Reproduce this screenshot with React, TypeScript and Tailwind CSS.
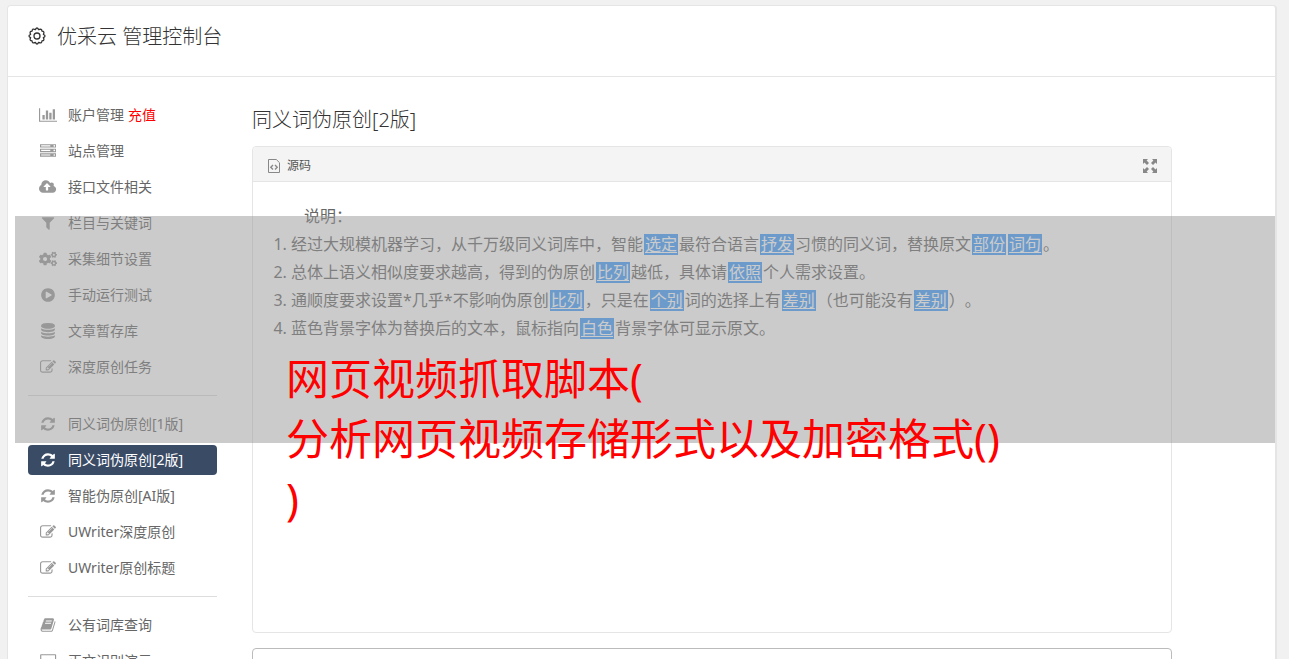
import type { ReactNode } from 'react'
import { FaCogs } from 'react-icons/fa'

type NavItem = {
  label: string
  icon: ReactNode
  extra?: string
  active?: boolean
}

function Glyph({ d, w = 1792 }: { d: string; w?: number }) {
  return (
    <svg viewBox={`0 0 ${w} 1792`} className="h-4 w-auto" fill="currentColor" aria-hidden="true">
      <path d={d} />
    </svg>
  )
}

const chart = <Glyph w={2048} d="M640 896v512h-256v-512h256zm384-512v1024h-256v-1024h256zm1024 1152v128h-2048v-1536h128v1408h1920zm-640-896v768h-256v-768h256zm384-384v1152h-256v-1152h256z" />
const server = <Glyph d="M128 1408h1024v-128h-1024v128zm0-512h1024v-128h-1024v128zm1568 448q0-40-28-68t-68-28-68 28-28 68 28 68 68 28 68-28 28-68zm-1568-960h1024v-128h-1024v128zm1568 448q0-40-28-68t-68-28-68 28-28 68 28 68 68 28 68-28 28-68zm0-512q0-40-28-68t-68-28-68 28-28 68 28 68 68 28 68-28 28-68zm96 832v384h-1792v-384h1792zm0-512v384h-1792v-384h1792zm0-512v384h-1792v-384h1792z" />
const cloud = <Glyph w={1920} d="M1280 864q0-14-9-23l-352-352q-9-9-23-9t-23 9l-351 351q-10 12-10 24 0 14 9 23t23 9h224v352q0 13 9.5 22.5t22.5 9.5h192q13 0 22.5-9.5t9.5-22.5v-352h224q13 0 22.5-9.5t9.5-22.5zm640 288q0 159-112.5 271.5t-271.5 112.5h-1088q-185 0-316.5-131.5t-131.5-316.5q0-130 70-240t188-165q-2-30-2-43 0-212 150-362t362-150q156 0 285.5 87t188.5 231q71-62 166-62 106 0 181 75t75 181q0 76-41 138 130 31 213.5 135.5t83.5 238.5z" />
const filter = <Glyph d="M1595 295q17 41-14 70l-493 493v742q0 42-39 59-13 5-25 5-27 0-45-19l-256-256q-19-19-19-45v-486l-493-493q-31-29-14-70 17-39 59-39h1280q42 0 59 39z" />
const play = <Glyph d="M896 128q209 0 385.5 103t279.5 279.5 103 385.5-103 385.5-279.5 279.5-385.5 103-385.5-103-279.5-279.5-103-385.5 103-385.5 279.5-279.5 385.5-103zm384 823q32-18 32-55t-32-55l-544-320q-31-19-64-1-32 19-32 56v640q0 37 32 56 16 8 32 8 17 0 32-9z" />
const database = <Glyph d="M896 768q237 0 443-43t325-127v170q0 69-103 128t-280 93.5-385 34.5-385-34.5-280-93.5-103-128v-170q119 84 325 127t443 43zm0 768q237 0 443-43t325-127v170q0 69-103 128t-280 93.5-385 34.5-385-34.5-280-93.5-103-128v-170q119 84 325 127t443 43zm0-384q237 0 443-43t325-127v170q0 69-103 128t-280 93.5-385 34.5-385-34.5-280-93.5-103-128v-170q119 84 325 127t443 43zm0-1152q208 0 385 34.5t280 93.5 103 128v128q0 69-103 128t-280 93.5-385 34.5-385-34.5-280-93.5-103-128v-128q0-69 103-128t280-93.5 385-34.5z" />
const edit = <Glyph d="M888 1184l116-116-152-152-116 116v56h96v96h56zm440-720q-16-16-33 1l-350 350q-17 17-1 33t33-1l350-350q17-17 1-33zm80 594v190q0 119-84.5 203.5t-203.5 84.5h-832q-119 0-203.5-84.5t-84.5-203.5v-832q0-119 84.5-203.5t203.5-84.5h832q63 0 117 25 15 7 18 23 3 17-9 29l-49 49q-14 14-32 8-23-6-45-6h-832q-66 0-113 47t-47 113v832q0 66 47 113t113 47h832q66 0 113-47t47-113v-126q0-13 9-22l64-64q15-15 35-7t20 29zm-96-738l288 288-672 672h-288v-288zm444 132l-92 92-288-288 92-92q28-28 68-28t68 28l152 152q28 28 28 68t-28 68z" />
const refresh = <Glyph d="M1639 1056q0 5-1 7-64 268-268 434.5t-478 166.5q-146 0-282.5-55t-243.5-157l-129 129q-19 19-45 19t-45-19-19-45v-448q0-26 19-45t45-19h448q26 0 45 19t19 45-19 45l-137 137q71 66 161 102t187 36q134 0 250-65t186-179q11-17 53-117 8-23 30-23h192q13 0 22.5 9.5t9.5 22.5zm25-800v448q0 26-19 45t-45 19h-448q-26 0-45-19t-19-45 19-45l138-138q-148-137-349-137-134 0-250 65t-186 179q-11 17-53 117-8 23-30 23h-199q-13 0-22.5-9.5t-9.5-22.5v-7q65-268 270-434.5t480-166.5q146 0 284 55.5t245 156.5l130-129q19-19 45-19t45 19 19 45z" />
const book = <Glyph d="M1703 478q40 57 18 129l-275 906q-19 64-76.5 107.5t-122.5 43.5h-923q-77 0-148.5-53.5t-99.5-131.5q-24-67-2-127 0-4 3-27t4-37q1-8-3-21.5t-3-19.5q2-11 8-21t16.5-23.5 16.5-23.5q23-38 45-91.5t30-91.5q3-10 .5-30t-.5-28q3-11 17-28t17-23q21-36 42-92t25-90q1-9-2.5-32t.5-28q4-13 22-30.5t22-22.5q19-26 42.5-84.5t27.5-96.5q1-8-3-25.5t-2-26.5q2-8 9-18t18-23 17-21q8-12 16.5-30.5t15-35 16-36 19.5-32 26.5-23.5 36-11.5 47.5 5.5l-1 3q38-9 51-9h761q74 0 114 56t18 130l-274 906q-36 119-71.5 153.5t-128.5 34.5h-869q-27 0-38 15-11 16-1 43 24 70 144 70h923q29 0 56-15.5t35-41.5l300-987q7-22 5-57 38 15 59 43zm-1064 2q-4 13 2 22.5t20 9.5h608q13 0 25.5-9.5t16.5-22.5l21-64q4-13-2-22.5t-20-9.5h-608q-13 0-25.5 9.5t-16.5 22.5zm-83 256q-4 13 2 22.5t20 9.5h608q13 0 25.5-9.5t16.5-22.5l21-64q4-13-2-22.5t-20-9.5h-608q-13 0-25.5 9.5t-16.5 22.5z" />
const screen = <Glyph w={2048} d="M224 128h1600q96 0 96 96v1100q0 96-96 96h-1600q-96 0-96-96v-1100q0-96 96-96zm32 128v1036h1536v-1036zM0 1536h2048v128h-2048z" />

const groups: NavItem[][] = [
  [
    { label: '账户管理', icon: chart, extra: '充值' },
    { label: '站点管理', icon: server },
    { label: '接口文件相关', icon: cloud },
    { label: '栏目与关键词', icon: filter },
    { label: '采集细节设置', icon: <FaCogs className="h-4 w-[18px]" /> },
    { label: '手动运行测试', icon: play },
    { label: '文章暂存库', icon: database },
    { label: '深度原创任务', icon: edit },
  ],
  [
    { label: '同义词伪原创[1版]', icon: refresh },
    { label: '同义词伪原创[2版]', icon: refresh, active: true },
    { label: '智能伪原创[AI版]', icon: refresh },
    { label: 'UWriter深度原创', icon: edit },
    { label: 'UWriter原创标题', icon: edit },
  ],
  [
    { label: '公有词库查询', icon: book },
    { label: '正文识别演示', icon: screen },
  ],
]

function NavLink({ item }: { item: NavItem }) {
  return (
    <a
      href="#"
      className={`flex h-[30px] items-center rounded-[4px] pl-[10px] text-sm ${item.active ? 'bg-[#3a4b66] text-white' : 'text-[#666]'}`}
    >
      <span className={`mr-[10px] flex w-5 justify-center ${item.active ? 'text-white' : 'text-[#999]'}`}>{item.icon}</span>
      {item.label}
      {item.extra && <span className="ml-1 text-[#f00]">{item.extra}</span>}
    </a>
  )
}

// Palabra sustituida, resaltada en azul
function Word({ children }: { children: ReactNode }) {
  return (
    <a href="#" className="mx-px inline-block bg-[#409eff] px-px leading-[21px] text-white underline underline-offset-2">
      {children}
    </a>
  )
}

function GearIcon() {
  return (
    <svg viewBox="0 0 18 18" className="size-[18px]" fill="none" stroke="currentColor" strokeWidth="1.3" aria-hidden="true">
      <path
        strokeLinejoin="round"
        d="M7.4 2.6Q9-.6 10.6 2.6Q14 1.400 13.9 4.1Q17 4.200 15.400 7.400Q18.600 9 15.400 10.600Q17 13.800 13.900 13.900Q13.800 17 10.600 15.400Q9 18.600 7.400 15.400Q4.200 17 4.100 13.900Q1 13.800 2.600 10.600Q-.6 9 2.600 7.400Q1 4.200 4.100 4.100Q4.200 1 7.400 2.600z"
      />
      <circle cx="9" cy="9" r="3" />
    </svg>
  )
}

function SourceIcon() {
  return (
    <svg viewBox="0 0 12 14" className="h-[14px] w-3 text-[#888]" fill="none" stroke="currentColor" aria-hidden="true">
      <path d="M.5.5h7.8l3.2 3.2v9.8H.5z" />
      <path strokeWidth="1.4" d="M5 6L2.800 8.200 5 10.400M7 6l2.200 2.200L7 10.400" />
    </svg>
  )
}

function ExpandIcon() {
  return (
    <svg viewBox="0 0 14 14" className="size-[14px]" fill="currentColor" aria-hidden="true">
      <path d="M0 0h5L3.600 1.500 6 4 4 6 1.500 3.600 0 5zM14 0v5l-1.500-1.400L10 6 8 4l2.400-2.500L9 0zM0 14V9l1.500 1.400L4 8l2 2-2.400 2.500L5 14zM14 14H9l1.400-1.500L8 10l2-2 2.500 2.400L14 9z" />
    </svg>
  )
}

export default function App() {
  return (
    <div className="relative h-screen overflow-hidden bg-[#f1f1f1] pt-[5px] pr-3 pl-[7px] font-['Noto_Sans','Noto_Sans_CJK_SC',sans-serif] text-[#333] [text-spacing-trim:space-all]">
      <div className="min-h-full rounded-[4px] border border-r-2 border-[#e5e5e5] bg-white">
        <header className="flex h-[71px] items-start border-b border-[#e5e5e5] pt-4 pl-5">
          <span className="mt-[5px] mr-[11px] flex"><GearIcon /></span>
          <h1 className="text-xl leading-[30px] font-light">优采云 管理控制台</h1>
        </header>

        <div className="flex pt-[23px] pl-5">
          <nav className="w-[189px] shrink-0">
            {groups.map((group, i) => (
              <ul
                key={i}
                className={`flex flex-col gap-[6px] ${i > 0 ? 'mt-[13px] border-t border-[#ddd] pt-[13px]' : ''}`}
              >
                {group.map((item) => (
                  <li key={item.label}>
                    <NavLink item={item} />
                  </li>
                ))}
              </ul>
            ))}
          </nav>

          <main className="min-w-0 flex-1 pr-[103px] pl-[35px]">
            <h2 className="mt-1 text-xl leading-8 font-light">同义词伪原创[2版]</h2>

            <section className="mt-[10px] rounded-[4px] border border-[#e5e5e5]">
              <div className="flex h-[35px] items-center justify-between rounded-t-[4px] border-b border-[#e5e5e5] bg-[#f4f4f4] pt-[3px] pr-[14px] pl-[15px]">
                <div className="flex items-center gap-[7px] text-xs text-[#555]">
                  <SourceIcon />
                  源码
                </div>
                <button type="button" aria-label="全屏" className="text-[#888]">
                  <ExpandIcon />
                </button>
              </div>
              <div className="h-[450px] pt-5 text-base leading-7 text-[#666]">
                <p className="pl-[51px]">说明：</p>
                <ol className="list-decimal pl-[38px]">
                  <li>经过大规模机器学习，从千万级同义词库中，智能<Word>选定</Word>最符合语言<Word>抒发</Word>习惯的同义词，替换原文<Word>部份</Word><Word>词句</Word>。</li>
                  <li>总体上语义相似度要求越高，得到的伪原创<Word>比列</Word>越低，具体请<Word>依照</Word>个人需求设置。</li>
                  <li>通顺度要求设置*几乎*不影响伪原创<Word>比列</Word>，只是在<Word>个别</Word>词的选择上有<Word>差别</Word>（也可能没有<Word>差别</Word>）。</li>
                  <li>蓝色背景字体为替换后的文本，鼠标指向<Word>白色</Word>背景字体可显示原文。</li>
                </ol>
              </div>
            </section>

            <textarea aria-label="原文" className="mt-[15px] block h-40 w-full resize-none rounded-[4px] border border-[#bbb]" />
          </main>
        </div>
      </div>

      <div className="absolute top-[216px] right-[14px] left-[15px] h-[227px] bg-[#989898]/50">
        <p className="pt-[133px] pl-[271px] text-[43px] leading-[60px] whitespace-nowrap text-[#f00]">
          网页视频抓取脚本(
          <br />
          分析网页视频存储形式以及加密格式()
          <br />)
        </p>
      </div>
    </div>
  )
}
